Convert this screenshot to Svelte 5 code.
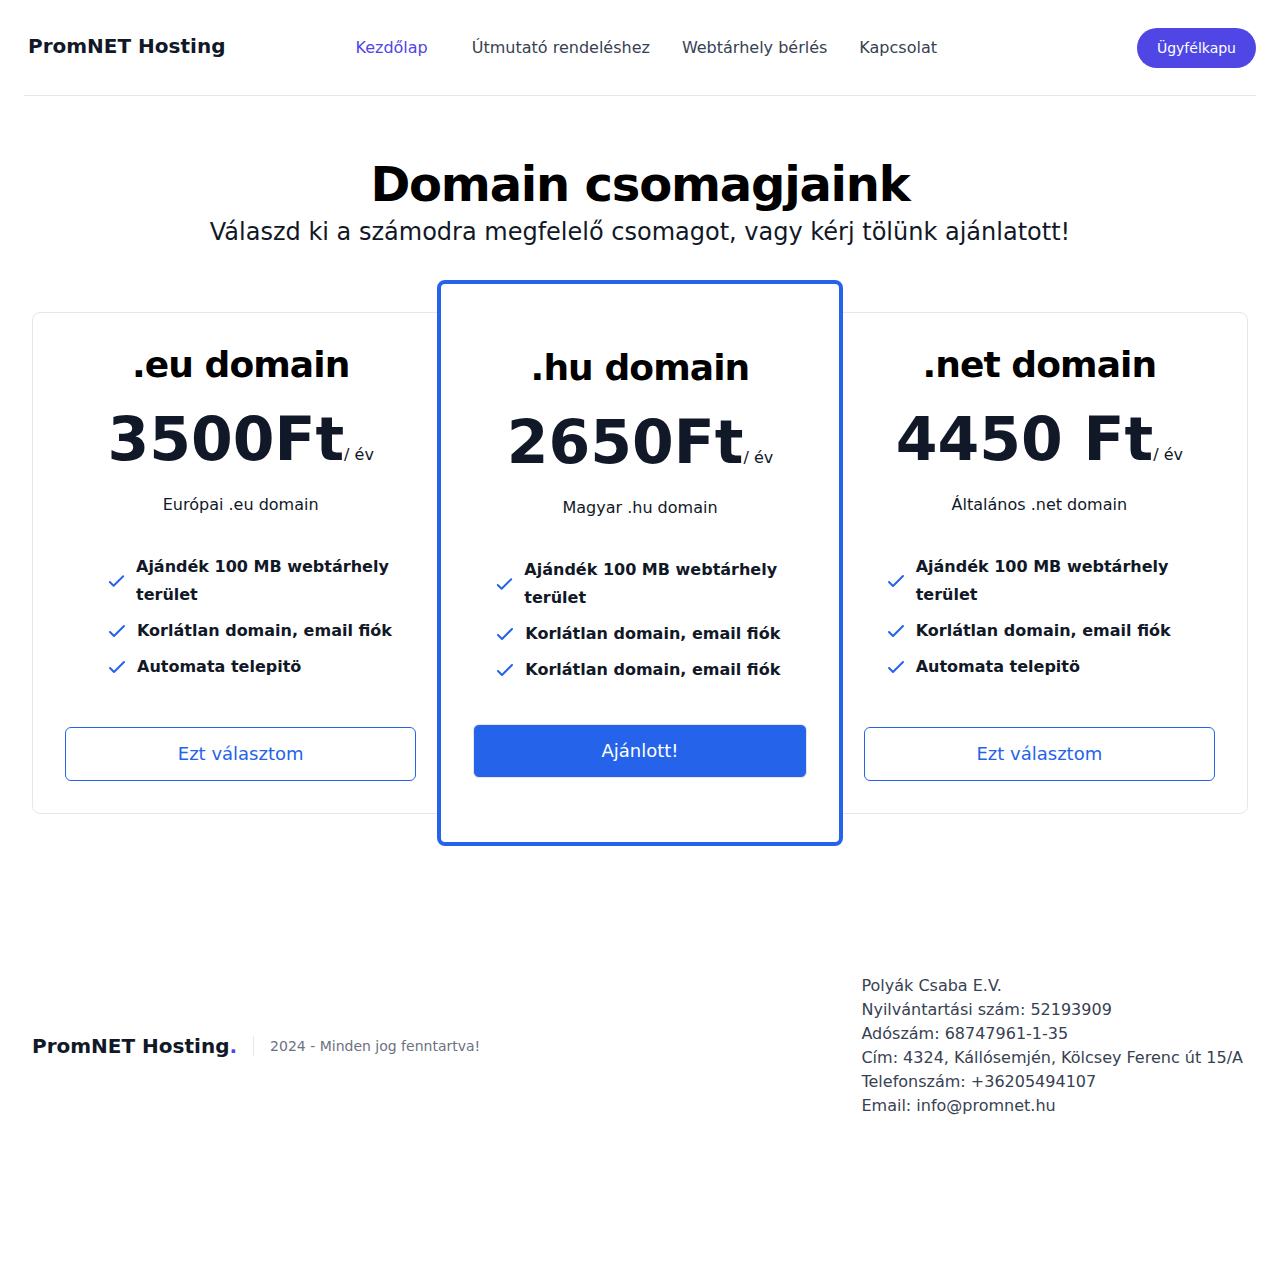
<script>
  const links = ['Útmutató rendeléshez', 'Webtárhely bérlés', 'Kapcsolat'];
  const gift = 'Ajándék 100 MB webtárhely terület';
  const unlimited = 'Korlátlan domain, email fiók';
  const installer = 'Automata telepitö';
  const plans = [
    { kind: 'first', name: '.eu domain', price: '3500Ft', about: 'Európai .eu domain', features: [gift, unlimited, installer], action: 'Ezt választom' },
    { kind: 'featured', name: '.hu domain', price: '2650Ft', about: 'Magyar .hu domain', features: [gift, unlimited, unlimited], action: 'Ajánlott!' },
    { kind: 'last', name: '.net domain', price: '4450 Ft', about: 'Általános .net domain', features: [gift, unlimited, installer], action: 'Ezt választom' },
  ];
</script>

<header>
  <a class="brand" href="#top">PromNET Hosting</a>
  <nav>
    <a class="active" href="#top">Kezdőlap</a>
    <div class="links">
      {#each links as link}
        <a href="#top">{link}</a>
      {/each}
    </div>
  </nav>
  <a class="portal" href="#portal">Ügyfélkapu</a>
</header>

<main>
  <h1>Domain csomagjaink</h1>
  <p class="lead">Válaszd ki a számodra megfelelő csomagot, vagy kérj tölünk ajánlatott!</p>

  <div class="plans">
    {#each plans as plan}
      <section class="plan {plan.kind}">
        <div class="details">
          <h2>{plan.name}</h2>
          <p class="price"><strong>{plan.price}</strong>/ év</p>
          <p class="about">{plan.about}</p>
          <ul>
            {#each plan.features as feature}
              <li>
                <svg viewBox="0 0 24 24" fill="none" stroke="currentColor" stroke-width="2" stroke-linecap="round" stroke-linejoin="round" aria-hidden="true">
                  <path d="M5 13l4 4L19 7" />
                </svg>
                <span>{feature}</span>
              </li>
            {/each}
          </ul>
        </div>
        <button type="button">{plan.action}</button>
      </section>
    {/each}
  </div>
</main>

<footer>
  <div class="legal">
    <a class="brand" href="#top">PromNET Hosting<span>.</span></a>
    <p>2024 - Minden jog fenntartva!</p>
  </div>
  <address>
    <div>Polyák Csaba E.V.</div>
    <div>Nyilvántartási szám: 52193909</div>
    <div>Adószám: 68747961-1-35</div>
    <div>Cím: 4324, Kállósemjén, Kölcsey Ferenc út 15/A</div>
    <div>Telefonszám: +36205494107</div>
    <div>Email: info@promnet.hu</div>
  </address>
</footer>

<style>
  :global(body) {
    margin: 0;
    background: #fff;
    color: #111827;
    font: 16px/24px 'DejaVu Sans', sans-serif;
  }
  :global(*) {
    box-sizing: border-box;
  }
  a {
    color: inherit;
    text-decoration: none;
  }
  h1, h2, p, ul {
    margin: 0;
    padding: 0;
  }
  header {
    display: flex;
    align-items: center;
    justify-content: space-between;
    margin: 0 24px;
    padding: 28px 0 27px;
    border-bottom: 1px solid #e5e7eb;
  }
  .brand {
    font-size: 20px;
    font-weight: 900;
    line-height: 20px;
  }
  header .brand {
    padding: 0 0 4px 4px;
  }
  nav {
    display: flex;
    gap: 44px;
    padding-right: 70px;
    color: #374151;
  }
  .links {
    display: flex;
    gap: 32px;
  }
  .active {
    color: #4f46e5;
  }
  .portal {
    padding: 10px 20px;
    border-radius: 20px;
    background: #4f46e5;
    color: #fff;
    font-size: 14px;
    line-height: 20px;
  }
  main {
    padding: 64px 32px 0;
    text-align: center;
  }
  h1 {
    color: #000;
    font-size: 48px;
    line-height: 48px;
    letter-spacing: -0.025em;
  }
  .lead {
    padding-top: 8px;
    font-size: 24px;
    line-height: 32px;
  }
  .plans {
    display: grid;
    grid-template-columns: repeat(3, minmax(0, 1fr));
    margin-top: 64px;
  }
  .plan {
    display: flex;
    flex-direction: column;
    justify-content: space-between;
    padding: 32px;
    border: 1px solid #e5e7eb;
    border-radius: 8px;
    background: #fff;
  }
  .first {
    margin-right: -12px;
  }
  .last {
    margin-left: -12px;
  }
  .featured {
    z-index: 1;
    gap: 40px;
    margin: -32px 0;
    padding: 64px 32px;
    border: 4px solid #2563eb;
  }
  h2 {
    color: #000;
    font-size: 36px;
    line-height: 40px;
    letter-spacing: -0.025em;
  }
  .price {
    padding-top: 24px;
  }
  .price strong {
    font-size: 60px;
    line-height: 60px;
  }
  .about {
    padding: 24px 0 36px;
  }
  ul {
    display: grid;
    gap: 8px;
    padding-left: 20px;
    list-style: none;
    text-align: left;
    font-weight: 600;
    line-height: 28px;
  }
  .first ul {
    padding-left: 40px;
  }
  li {
    display: flex;
    align-items: center;
    gap: 8px;
  }
  svg {
    width: 24px;
    min-width: 23px;
    height: 24px;
    color: #2563eb;
  }
  .last svg {
    flex-shrink: 0;
  }
  button {
    padding: 12px 20px;
    border: 1px solid #2563eb;
    border-radius: 6px;
    background: #fff;
    color: #2563eb;
    font: 18px/28px 'DejaVu Sans', sans-serif;
  }
  .featured button {
    border-color: #e5e7eb;
    background: #2563eb;
    color: #fff;
  }
  footer {
    display: flex;
    align-items: center;
    justify-content: space-between;
    padding: 160px 37px 160px 32px;
  }
  .legal {
    display: flex;
    align-items: center;
    gap: 16px;
  }
  .legal span {
    color: #4f46e5;
  }
  .legal p {
    padding-left: 16px;
    border-left: 1px solid #e5e7eb;
    color: #6b7280;
    font-size: 14px;
    line-height: 20px;
  }
  address {
    color: #374151;
    font-style: normal;
  }
</style>
